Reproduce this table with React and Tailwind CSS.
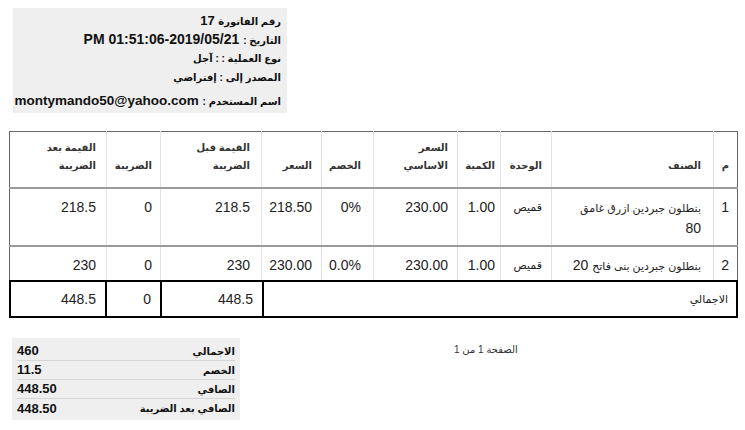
import React from "react";

const ar = "text-[10px]";

const rows = [
  {
    no: "1",
    name: (
      <>
        <span className="text-[11px]">بنطلون جبردين ازرق غامق</span>
        <br />
        80
      </>
    ),
    unit: "قميص",
    qty: "1.00",
    base: "230.00",
    disc: "0%",
    price: "218.50",
    before: "218.5",
    tax: "0",
    after: "218.5",
    h: "h-[58px]",
  },
  {
    no: "2",
    name: (
      <>
        <span className="text-[11px]">بنطلون جبردين بنى فاتح</span> 20
      </>
    ),
    unit: "قميص",
    qty: "1.00",
    base: "230.00",
    disc: "0.0%",
    price: "230.00",
    before: "230",
    tax: "0",
    after: "230",
    h: "h-[35px]",
  },
];

const summary = [
  ["الاجمالي", "460"],
  ["الخصم", "11.5"],
  ["الصافي", "448.50"],
  ["الصافي بعد الضريبة", "448.50"],
];

// padding per column, right-to-left
const pads = [
  "pl-[6px] pr-[8px]",
  "pl-[8px] pr-[12px]",
  "pl-[6px] pr-[9px]",
  "pl-[4px] pr-[5px]",
  "pl-[6px] pr-[9px]",
  "pl-[10px] pr-[12px]",
  "pl-[6px] pr-[9px]",
  "pl-[8px] pr-[11px]",
  "pl-[6px] pr-[8px]",
  "pl-[6px] pr-[10px]",
];

const th = "align-bottom text-right font-bold text-[10px] leading-[18px] text-[#333] pb-[12px]";
const td = "align-top text-right whitespace-nowrap leading-[20px] text-[#222] pt-[8px]";
const line = (i) => (i < 9 ? " border-l border-[#e3e3e3]" : "");

const App = () => {
  const heads = [
    "م",
    "الصنف",
    "الوحدة",
    "الكمية",
    <>
      السعر
      <br />
      الاساسي
    </>,
    "الخصم",
    "السعر",
    <>
      القيمة قبل
      <br />
      الضريبة
    </>,
    "الضريبة",
    <>
      القيمة بعد
      <br />
      الضريبة
    </>,
  ];

  return (
    <div className="w-[745px] h-[430px] bg-white overflow-hidden font-['Liberation_Sans','DejaVu_Sans',sans-serif] text-[#111]">
      <div className="flex pt-[8px] pl-[13px]">
        <div
          dir="rtl"
          className="w-[274px] h-[105px] bg-[#efefef] pr-[6px] pt-[3px] font-bold text-[13px] whitespace-nowrap"
        >
          <div className="h-[19px] leading-[19px]">
            <span className={ar}>رقم الفاتورة</span> 17
          </div>
          <div className="h-[19px] leading-[19px] text-[14px]">
            <span className={ar}>التاريخ :</span>{" "}
            <span dir="ltr" className="[unicode-bidi:isolate]">PM 01:51:06-2019/05/21</span>
          </div>
          <div className="h-[19px] leading-[19px] text-[10px]">نوع العملية : : آجل</div>
          <div className="h-[19px] leading-[19px] text-[10px]">المصدر إلى : إفتراضي</div>
          <div className="mt-[4px] h-[19px] leading-[19px] text-[13.5px]">
            <span className={ar}>اسم المستخدم :</span> montymando50@yahoo.com
          </div>
        </div>
      </div>

      <div className="pl-[9px] pt-[18px]">
        <table dir="rtl" className="table-fixed border-collapse w-[728px] border border-[#666]">
          <colgroup>
            <col className="w-[24px]" />
            <col className="w-[162px]" />
            <col className="w-[51px]" />
            <col className="w-[43px]" />
            <col className="w-[84px]" />
            <col className="w-[52px]" />
            <col className="w-[60px]" />
            <col className="w-[101px]" />
            <col className="w-[54px]" />
            <col className="w-[97px]" />
          </colgroup>
          <thead>
            <tr className="h-[56px] border-b-2 border-[#9a9a9a]">
              {heads.map((h, i) => (
                <th key={i} className={th + " " + pads[i] + line(i)}>
                  {h}
                </th>
              ))}
            </tr>
          </thead>
          <tbody>
            {rows.map((r, ri) => {
              const cells = [r.no, r.name, r.unit, r.qty, r.base, r.disc, r.price, r.before, r.tax, r.after];
              return (
                <tr key={r.no} className={r.h + (ri === 0 ? " border-b-2 border-[#9a9a9a]" : "")}>
                  {cells.map((c, i) => (
                    <td
                      key={i}
                      className={td + " " + pads[i] + line(i) + (i === 2 ? " text-[11px]" : " text-[14px]")}
                    >
                      {c}
                    </td>
                  ))}
                </tr>
              );
            })}
          </tbody>
        </table>
        <div dir="rtl" className="flex w-[729px] h-[38px] -mt-px text-[14px] text-[#222]">
          <div className="w-[476px] border-2 border-black flex items-center pr-[8px] text-[11px]">الاجمالي</div>
          <div className="w-[102px] border-y-2 border-l-2 border-black flex items-center px-[9px]">448.5</div>
          <div className="w-[55px] border-y-2 border-l-2 border-black flex items-center px-[9px]">0</div>
          <div className="w-[96px] border-y-2 border-l-2 border-black flex items-center px-[9px]">448.5</div>
        </div>
      </div>

      <div className="flex items-start pl-[12px] pt-[20px]">
        <div dir="rtl" className="w-[228px] bg-[#efefef] px-[5px] pt-[4px] pb-[2px] font-bold">
          {summary.map(([k, v], i) => (
            <div
              key={k}
              className={
                "flex justify-between items-center h-[19px] " +
                (i < summary.length - 1 ? "border-b border-[#d6d6d6]" : "")
              }
            >
              <span className="text-[10px]">{k}</span>
              <span className="text-[13px]">{v}</span>
            </div>
          ))}
        </div>
        <div dir="rtl" className="ml-[214px] mt-[4px] text-[10px] text-[#333]">
          الصفحة 1 من 1
        </div>
      </div>
    </div>
  );
};

export default App;
